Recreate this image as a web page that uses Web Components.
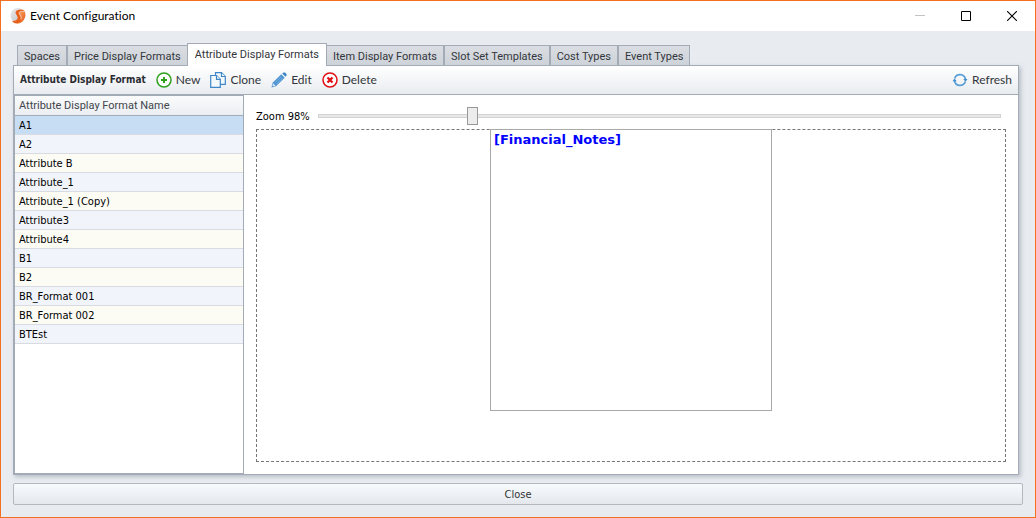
<!DOCTYPE html>
<html lang="en">
<head>
<meta charset="utf-8">
<title>Event Configuration</title>
<style>
  html, body { height: 100%; margin: 0; }
  body { font: 11px/18px "DejaVu Sans Condensed", "Noto Sans", sans-serif; color: #000; }
</style>
</head>
<body>
<event-window>
  <title-bar slot="title">Event Configuration</title-bar>
  <tab-strip slot="tabs">
    <tab-item>Spaces</tab-item>
    <tab-item>Price Display Formats</tab-item>
    <tab-item active>Attribute Display Formats</tab-item>
    <tab-item>Item Display Formats</tab-item>
    <tab-item>Slot Set Templates</tab-item>
    <tab-item>Cost Types</tab-item>
    <tab-item>Event Types</tab-item>
  </tab-strip>
  <tool-bar slot="toolbar" heading="Attribute Display Format">
    <tool-button icon="new">New</tool-button>
    <tool-button icon="clone">Clone</tool-button>
    <tool-button icon="edit">Edit</tool-button>
    <tool-button icon="delete">Delete</tool-button>
    <tool-button icon="refresh" slot="end">Refresh</tool-button>
  </tool-bar>
  <format-list slot="list"></format-list>
  <format-preview slot="preview">[Financial_Notes]</format-preview>
  <wide-button slot="footer">Close</wide-button>
</event-window>

<script>
const define = (name, html, setup) => customElements.define(name, class extends HTMLElement {
  connectedCallback() {
    if (this.shadowRoot) return;
    const root = this.attachShadow({ mode: 'open' });
    root.innerHTML = html;
    if (setup) setup(root, this);
  }
});

define('event-window', `
<style>
  :host { display: flex; flex-direction: column; box-sizing: border-box; min-height: 100%; border: 1px solid #f37021; background: #e8ebf0; }
  main { flex: 1; display: flex; flex-direction: column; padding: 12px; }
  .panel { flex: 1; display: flex; flex-direction: column; margin-right: 4px; border: 1px solid #a3abb6; background: #fff; box-shadow: 2px 2px 4px #b9bec7; }
  .split { flex: 1; display: grid; grid-template-columns: 230px 1fr; }
  footer { margin-top: 8px; }
</style>
<slot name="title"></slot>
<main>
  <slot name="tabs"></slot>
  <section class="panel">
    <slot name="toolbar"></slot>
    <div class="split"><slot name="list"></slot><slot name="preview"></slot></div>
  </section>
  <footer><slot name="footer"></slot></footer>
</main>`);

define('title-bar', `
<style>
  :host { display: flex; align-items: center; height: 30px; padding-left: 8px; background: #fff; font: 12px/18px Lato, sans-serif; font-variant-ligatures: none; }
  .name { flex: 1; margin-left: 4px; }
  button { width: 46px; height: 30px; padding: 0; border: 0; background: none; display: grid; place-items: center; }
  svg { display: block; }
</style>
<svg width="17" height="18" viewBox="0 0 17 18" aria-hidden="true">
  <defs>
    <linearGradient id="g" x1="0" y1="0" x2="1" y2="1"><stop offset="0" stop-color="#ececee"/><stop offset="1" stop-color="#bdbdc0"/></linearGradient>
    <linearGradient id="o" x1="0" y1="0" x2="1" y2="1"><stop offset="0" stop-color="#f9b27a"/><stop offset="1" stop-color="#e2520b"/></linearGradient>
  </defs>
  <ellipse cx="8.500" cy="8.500" rx="7" ry="7.500" fill="url(#g)"/>
  <path d="M9 5.500Q12 5 15.300 3.800Q17.200 7 16 10.500Q14 16.500 8 16.500Q11.500 13.500 10.600 10.500Q10 8.500 9 5.500Z" fill="url(#o)"/>
  <path d="M15.500 3.400Q12.500 2 9 3Q5 4.500 7.300 7.500Q9.500 10 8.300 12.300Q6.500 14.300 2.800 13.800Q5.500 17.500 9 16.300Q13 14.500 12 10.500Q11.500 8.500 10 7Q9.500 5.200 12.500 4.800Z" fill="#e8601a"/>
  <path d="M15.300 4.300Q12 4.100 10.500 4.900Q9.300 5.800 10.800 7.500Q13 10 12 12.500" fill="none" stroke="#fde3d0" stroke-width=".7"/>
</svg>
<span class="name"><slot></slot></span>
<button aria-label="Minimize" disabled><svg width="10" height="10"><path d="M0 4.500H10" stroke="#c4c4c4"/></svg></button>
<button aria-label="Maximize"><svg width="10" height="10"><path d="M.5 .5H9.500V9.500H.5Z" fill="none" stroke="#000"/></svg></button>
<button aria-label="Close window"><svg width="10" height="10"><path d="M0 0L10 10M10 0L0 10" stroke="#000" stroke-width="1.100"/></svg></button>`);

define('tab-strip', `
<style>
  :host { display: flex; align-items: flex-end; padding-left: 4px; position: relative; z-index: 1; margin-bottom: -1px; height: 23px; }
</style>
<slot></slot>`, (root, host) => host.setAttribute('role', 'tablist'));

define('tab-item', `
<style>
  :host { display: block; font: 11px/18px Roboto, sans-serif; }
  :host([active]) { margin: 0 -1px; }
  button { display: block; height: 21px; padding: 2px 6px 0; border: 1px solid #a3abb6; background: linear-gradient(#dadde2, #ced3d9); color: #33363c; font: inherit; white-space: nowrap; }
  :host([active]) button { height: 23px; padding: 0 7px; border-bottom: 0; background: #fff; }
</style>
<button role="tab"><slot></slot></button>`, (root, host) =>
  root.querySelector('button').setAttribute('aria-selected', host.hasAttribute('active')));

define('tool-bar', `
<style>
  :host { display: flex; align-items: center; gap: 10px; height: 28px; padding: 0 6px; border-bottom: 1px solid #a3abb6; background: linear-gradient(#fff, #e9ecf0); }
  h1 { margin: 0; font-size: 10px; font-weight: bold; color: #2b2d33; }
  .end { margin-left: auto; }
</style>
<h1></h1><slot></slot><div class="end"><slot name="end"></slot></div>`, (root, host) => {
  root.querySelector('h1').textContent = host.getAttribute('heading');
});

const icons = {
  new: '<circle cx="8" cy="8" r="7" fill="#fff" stroke="#2fa01f" stroke-width="1.500"/><path d="M8 5V11M5 8H11" stroke="#2fa01f" stroke-width="2"/>',
  clone: '<g fill="#f4f9fd" stroke="#3f86c6" stroke-width="1.200"><path d="M5.500 .7H11.500L15.300 4.500V12.400H5.500Z"/><path d="M11.500 .7V4.500H15.300"/><path d="M.7 3.500H6.500L10.300 7.300V15.300H.7Z"/><path d="M6.500 3.500V7.300H10.300"/></g>',
  edit: '<path d="M.5 15.500L1.600 10.800L10.300 2.300L13.700 5.700L5 14.300Z" fill="#4a91d0"/><path d="M4 10.700L10.500 4.300M5.500 12.200L12 5.700" stroke="#8dbce6" stroke-width=".8"/><path d="M11.200 1.500L12.500 .5H14L15.500 2V3.300L14.500 4.700Z" fill="#3d83c3"/><path d="M2 11L4.800 14L2.300 14.600L1.400 13.700Z" fill="#cfe3f5"/>',
  delete: '<circle cx="8" cy="8" r="7" fill="#fff" stroke="#e00f14" stroke-width="1.500"/><path d="M5.500 5.500L10.500 10.500M10.500 5.500L5.500 10.500" stroke="#e00f14" stroke-width="2.300"/>',
  refresh: '<path d="M2.700 6.500A5.600 5.600 0 0 1 13.500 7M13.300 9.500A5.600 5.600 0 0 1 2.500 9" fill="none" stroke="#5a9fd6" stroke-width="1.700"/><path d="M11.300 7H15.500L13.500 9.700ZM.5 9.300H4.700L2.500 6.600Z" fill="#3f8ccb"/>'
};

define('tool-button', `
<style>
  :host { display: block; }
  button { display: flex; align-items: center; gap: 4px; padding: 0; border: 0; background: none; color: #33363c; font: 12px/18px Lato, sans-serif; }
  svg { display: block; }
</style>
<button><svg width="16" height="16" viewBox="0 0 16 16" aria-hidden="true"></svg><slot></slot></button>`, (root, host) => {
  root.querySelector('svg').innerHTML = icons[host.getAttribute('icon')];
});

const names = ['A1', 'A2', 'Attribute B', 'Attribute_1', 'Attribute_1 (Copy)', 'Attribute3', 'Attribute4', 'B1', 'B2', 'BR_Format 001', 'BR_Format 002', 'BTEst'];

define('format-list', `
<style>
  :host { display: block; border: 1px solid #a3abb6; }
  table { width: 100%; border-collapse: separate; border-spacing: 0; }
  th, td { text-align: left; font-weight: normal; }
  th { height: 19px; padding: 0 4px; border-bottom: 1px solid #a3abb6; background: linear-gradient(#fafbfc, #ebeef2); color: #43464c; font: 11px/18px Roboto, sans-serif; }
  td { padding: 2px 4px 0; line-height: 16px; border-bottom: 1px solid #d8dce2; background: #fcfcf4; }
  tr:nth-child(even) td { background: #f1f4fa; }
  tr.selected td { background: #c7ddf4; }
</style>
<table>
  <thead><tr><th scope="col">Attribute Display Format Name</th></tr></thead>
  <tbody></tbody>
</table>`, root => {
  root.querySelector('tbody').innerHTML = names.map((n, i) =>
    `<tr${i ? '' : ' class="selected" aria-selected="true"'}><td>${n}</td></tr>`).join('');
});

define('format-preview', `
<style>
  :host { display: flex; flex-direction: column; padding: 12px; }
  .zoom { display: flex; align-items: center; gap: 8px; height: 18px; margin-bottom: 4px; padding-right: 5px; }
  label { padding-top: 2px; line-height: 16px; }
  input { flex: 1; min-width: 0; height: 18px; margin: 0; appearance: none; background: none; }
  input::-webkit-slider-runnable-track { box-sizing: border-box; height: 4px; border: 1px solid #d3d3d3; background: #e7e9e9; }
  input::-webkit-slider-thumb { appearance: none; box-sizing: border-box; width: 11px; height: 18px; margin-top: -8px; border: 1px solid #999; background: #ececec; }
  .canvas { flex: 1; display: flex; justify-content: center; align-items: flex-start; border: 1px dashed #777; }
  .sheet { box-sizing: border-box; width: 282px; height: 282px; margin-top: -1px; padding: 0 3px; border: 1px solid #a9a9a9; color: #00f; font: bold 13px/20px "DejaVu Sans", sans-serif; }
</style>
<div class="zoom"><label for="zoom">Zoom 98%</label><input id="zoom" type="range" min="10" max="407" value="98"></div>
<div class="canvas"><div class="sheet"><slot></slot></div></div>`);

define('wide-button', `
<style>
  :host { display: block; }
  button { display: block; box-sizing: border-box; width: 100%; height: 22px; padding: 2px 0 0; border: 1px solid #b4b9c0; border-radius: 2px; background: linear-gradient(#f8fbfe, #e4e7eb); color: #333; font: inherit; }
</style>
<button><slot></slot></button>`);
</script>
</body>
</html>
